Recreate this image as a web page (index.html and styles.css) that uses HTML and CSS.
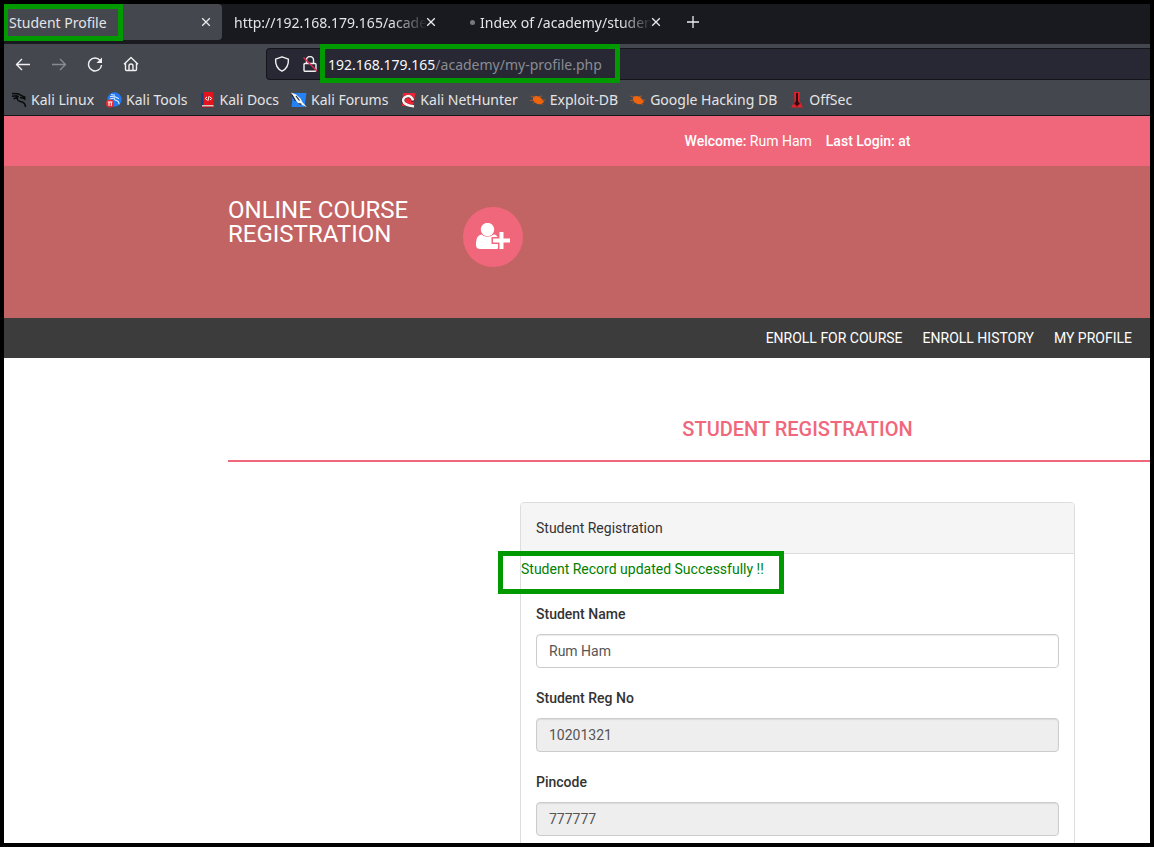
FILE: index.html
```html
<!DOCTYPE html>
<html lang="en">
<head>
<meta charset="utf-8">
<meta name="viewport" content="width=device-width, initial-scale=1">
<title>Student Profile</title>
<link rel="stylesheet" href="styles.css">
</head>
<body>
<div class="tabs">
  <div class="tab tab-active">
    <span class="tab-label">Student Profile</span>
    <button class="tab-close" aria-label="Close tab"><svg width="10" height="10" viewBox="0 0 10 10"><path d="M1.2 1.2l7.6 7.6M8.8 1.2L1.2 8.8"/></svg></button>
    <span class="mark mark-tab"></span>
  </div>
  <div class="tab">
    <span class="tab-label tab-fade">http://192.168.179.165/acade</span>
    <button class="tab-close" aria-label="Close tab"><svg width="10" height="10" viewBox="0 0 10 10"><path d="M1.2 1.2l7.6 7.6M8.8 1.2L1.2 8.8"/></svg></button>
  </div>
  <div class="tab tab-loading">
    <span class="tab-dot"></span>
    <span class="tab-label tab-fade">Index of /academy/studen</span>
    <button class="tab-close" aria-label="Close tab"><svg width="10" height="10" viewBox="0 0 10 10"><path d="M1.2 1.2l7.6 7.6M8.8 1.2L1.2 8.8"/></svg></button>
  </div>
  <button class="tab-new" aria-label="New tab"><svg width="14" height="14" viewBox="0 0 14 14"><path d="M7 1v12M1 7h12"/></svg></button>
</div>
<div class="toolbar">
  <div class="nav-buttons">
    <button class="tool" aria-label="Back"><svg width="16" height="16" viewBox="0 0 16 16"><path d="M15 8.500H1.500M7 3L1.500 8.500 7 14"/></svg></button>
    <button class="tool tool-off" aria-label="Forward"><svg width="16" height="16" viewBox="0 0 16 16"><path d="M1 8.500h13.500M9 3l5.500 5.500L9 14"/></svg></button>
    <button class="tool" aria-label="Reload"><svg width="16" height="16" viewBox="0 0 16 16"><path d="M13.200 4.500A6.500 6.500 0 1 0 14.500 9"/><path d="M15 1.500V7H9.500z" class="solid"/></svg></button>
    <button class="tool" aria-label="Home"><svg width="16" height="16" viewBox="0 0 16 16"><path d="M1 8.200L8 1.500l7 6.700M2.500 7v6.500a1 1 0 0 0 1 1h9a1 1 0 0 0 1-1V7M6 14.500V10a2 2 0 0 1 4 0v4.500"/></svg></button>
  </div>
  <div class="address">
    <svg class="line-icon" width="16" height="16" viewBox="0 0 16 16"><path d="M8 .8l6.400 2.400c.3 5.200-1.400 9.500-6.400 12C3 12.700 1.300 8.400 1.600 3.200z"/></svg>
    <svg class="line-icon" width="16" height="16" viewBox="0 0 16 16"><path d="M4.500 7V4a3.500 3.500 0 0 1 7 0v3M3 7.500h10a1 1 0 0 1 1 1v5.700a1 1 0 0 1-1 1H3a1 1 0 0 1-1-1V8.500a1 1 0 0 1 1-1z"/><path d="M1.500 1.500l13.500 13.500" class="slash"/></svg>
    <div class="url"><span class="url-host">192.168.179.165</span>/academy/my-profile.php<span class="mark mark-url"></span></div>
  </div>
</div>
<nav class="bookmarks" aria-label="Bookmarks">
  <a href="#"><svg width="16" height="16" viewBox="0 0 16 16"><path d="M1 1.500l6 .3 4 2 3.500 1.700M1 4.200l5.500-.4M2.500 6.800l4.500-1.500M7.500 4C5 6.500 6.500 9 9.500 9.500c3 .4 4.800 1.800 5 5.500M9 5.500l3.500.7 2 1.300" fill="none" stroke="#08090b" stroke-width="1.500"/></svg>Kali Linux</a>
  <a href="#"><svg width="16" height="16" viewBox="0 0 16 16"><circle cx="8.500" cy="7.500" r="7.200" fill="#2478f2"/><path d="M4 4.500l5 .3 4 2M8.500 5.500c-1 2 .5 2.800 2.500 3.300 1.500.4 2 1.700 2 3.500M3.500 7l4-.8M5 2.500l4 .8" fill="none" stroke="#d8edff" stroke-width="1.100"/><circle cx="4" cy="11.500" r="4" fill="#e92a32"/><path d="M1.800 10h4.600M3 10v4M5.300 10v4" stroke="#fff" fill="none"/></svg>Kali Tools</a>
  <a href="#"><svg width="16" height="16" viewBox="0 0 16 16"><path d="M1.500 1h2v13h-2z" fill="#123d7d"/><path d="M3.500 0h10v13h-10z" fill="#e3141b"/><path d="M2 13h11.500v2H2z" fill="#d7c9c9"/><path d="M2 14.500h11.500v1H2z" fill="#b30c17"/><path d="M7 5L5.200 6.500 7 8M10 5l1.800 1.500L10 8M9.200 4L7.800 9" fill="none" stroke="#fff" stroke-width="1"/></svg>Kali Docs</a>
  <a href="#"><svg width="16" height="16" viewBox="0 0 16 16"><path d="M2 1h13.500L13.500 15H.5z" fill="#2482f5"/><path d="M0 .5l5 2 4.500 4 2.200 4 4.300 4.800-4-2-4-1.300L4.500 8 2.500 4.500z" fill="#f5f3ed"/><path d="M5 4l3.500 4.500M1 3l3.500 6M7.500 11.500l3 .8" stroke="#17243a" stroke-width="1.200"/></svg>Kali Forums</a>
  <a href="#"><svg width="16" height="16" viewBox="0 0 16 16"><path d="M3 1h12.500L13 14H2z" fill="#ed2435"/><path d="M13 9.500C12.500 5.500 10 4 7 4.500c-4 1-5 4-2.800 6.500s5 2.500 9.800 3.500" fill="none" stroke="#35131d" stroke-width="3.200"/><path d="M13 8.500C12.500 5.500 10 3.500 7 4.200c-4 1-5 4.500-2.800 6.800s5 2.500 9.800 3.500" fill="none" stroke="#f7f2f0" stroke-width="2.600"/></svg>Kali NetHunter</a>
  <a href="#"><svg width="16" height="16" viewBox="0 0 16 16"><path d="M3 5C6 3 9.500 4 11.500 6.500l2.500 3.500-2.500 2C8 13 4 11 3 8z" fill="#ef640d"/><path d="M.5 4l4 1.500M0 8.500l4-.5M9 4.500l3-.5M11 8h4.500M5 9.500l-2 2M11 10.500l1.500 2.500" stroke="#c65c22" stroke-width=".8"/></svg>Exploit-DB</a>
  <a href="#"><svg width="16" height="16" viewBox="0 0 16 16"><path d="M3 5C6 3 9.500 4 11.500 6.500l2.500 3.500-2.500 2C8 13 4 11 3 8z" fill="#ef640d"/><path d="M.5 4l4 1.500M0 8.500l4-.5M9 4.500l3-.5M11 8h4.500M5 9.500l-2 2M11 10.500l1.500 2.500" stroke="#c65c22" stroke-width=".8"/></svg>Google Hacking DB</a>
  <a href="#"><svg width="16" height="16" viewBox="0 0 16 16"><path d="M5 0h6l-.5 9 3.500 6.500H2L5.500 10z" fill="#e32028"/><path d="M7 1h2v8l2 3-2 1-1 2-1-2-2-1 2-3z" fill="#320b12"/></svg>OffSec</a>
</nav>
<div class="page">
  <header class="welcome"><p><strong>Welcome:</strong> Rum Ham</p><p><strong>Last Login: at</strong></p></header>
  <div class="banner">
    <a class="brand" href="#">Online Course Registration</a>
    <span class="user-badge"><svg width="36" height="28" viewBox="0 0 36 28"><circle cx="12.500" cy="6.500" r="6.700"/><path d="M6.500 11.500c4 3 8 3 12 0 3 0 4.500 2 5 5v8.500c-.5.500-1.500 1-3 1H5c-2.500 0-4-1.500-4-4 0-5 1-10 5.500-10.500z"/><path class="plus-edge" d="M24.500 9h4v6.500H35v4h-6.500V26h-4v-6.500H18v-4h6.500z"/><path d="M24.500 9h4v6.500H35v4h-6.500V26h-4v-6.500H18v-4h6.500z"/></svg></span>
  </div>
  <nav class="menu" aria-label="Main"><a href="#">Enroll for Course</a><a href="#">Enroll History</a><a href="#">My Profile</a></nav>
  <main class="content">
    <h1 class="title">Student Registration</h1>
    <section class="panel">
      <h2 class="panel-heading">Student Registration</h2>
      <p class="message">Student Record updated Successfully !!<span class="mark mark-message"></span></p>
      <form class="form">
        <div class="field"><label for="name">Student Name</label><input id="name" type="text" value="Rum Ham"></div>
        <div class="field"><label for="regno">Student Reg No</label><input id="regno" type="text" value="10201321" readonly></div>
        <div class="field"><label for="pincode">Pincode</label><input id="pincode" type="text" value="777777" readonly></div>
      </form>
    </section>
  </main>
</div>
</body>
</html>
```
FILE: styles.css
```css
* { box-sizing: border-box; }
html { background: #000; }
body {
  margin: 0;
  height: 100vh;
  border: 4px solid #000;
  display: flex;
  flex-direction: column;
  overflow: hidden;
  font: 14px/20px Roboto, "Liberation Sans", sans-serif;
  color: #333;
}
button { border: 0; padding: 0; background: none; color: inherit; display: flex; align-items: center; justify-content: center; }
svg { display: block; flex: none; }
a { color: inherit; text-decoration: none; }
p, h1, h2 { margin: 0; font-weight: 400; }

.tabs, .toolbar, .bookmarks { font-family: "Noto Sans", sans-serif; color: #e4e4e6; flex: none; display: flex; }
.tabs { height: 40px; background: #191a20; }
.tab { position: relative; width: 225px; height: 36px; padding: 0 8px 0 12px; display: flex; align-items: center; }
.tab-active { width: 218px; padding-left: 5px; background: #44474d; border-radius: 0 4px 4px 0; }
.tab-label { flex: 1; min-width: 0; padding-top: 1px; white-space: nowrap; }
.tab-fade { margin-right: -8px; -webkit-mask-image: linear-gradient(to right, #000 80%, transparent 98%); mask-image: linear-gradient(to right, #000 80%, transparent 98%); }
.tab-loading { padding-left: 23px; gap: 5px; }
.tab-loading .tab-label { margin-right: -13px; }
.tab-dot { width: 5px; height: 5px; border-radius: 50%; background: #77787d; }
.tab-close { width: 16px; height: 16px; }
.tab-close svg, .tab-new svg { fill: none; stroke: #ececee; stroke-width: 1.3; }
.tab-new { width: 42px; height: 36px; }

.toolbar { height: 40px; background: #44474d; align-items: center; }
.nav-buttons { width: 262px; padding-left: 11px; display: flex; gap: 20px; }
.tool svg, .line-icon { fill: none; stroke: #f0f0f2; stroke-width: 1.4; stroke-linejoin: round; }
.tool .solid { fill: #f0f0f2; stroke: none; }
.tool-off { opacity: .4; }
.line-icon .slash { stroke: #e22850; }
.address { flex: 1; height: 32px; padding-left: 7px; display: flex; align-items: center; gap: 12px; background: #272833; border: 1px solid #15161b; border-right: 0; border-radius: 4px 0 0 4px; }
.url { position: relative; flex: 1; margin-left: -2px; padding-top: 1px; color: #8a8b92; }
.url-host { color: #f8f8fa; }

.bookmarks { height: 32px; padding-left: 7px; gap: 12px; align-items: center; background: #44474d; border-bottom: 1px solid #15161b; }
.bookmarks a { display: flex; align-items: center; gap: 4px; white-space: nowrap; }

.page { flex: 1; min-height: 0; overflow: hidden; background: #fff; }
.welcome { height: 50px; padding-left: 441px; display: flex; align-items: center; justify-content: center; gap: 14px; background: #f0677c; color: #fff; }
.welcome strong, .field label { font-weight: 500; }
.banner { height: 152px; padding-left: 224px; display: flex; background: #c36464; }
.brand { width: 235px; padding: 32px 30px 0 0; color: #fff; font-size: 24px; line-height: 24px; text-transform: uppercase; }
.user-badge { width: 60px; height: 60px; margin-top: 41px; border-radius: 50%; background: #f0677c; display: flex; align-items: center; justify-content: center; }
.user-badge svg { fill: #fff; }
.user-badge .plus-edge { fill: #f0677c; stroke: #f0677c; stroke-width: 3; }
.menu { height: 40px; padding-right: 18px; display: flex; align-items: center; justify-content: flex-end; gap: 20px; background: #3c3c3c; color: #fff; text-transform: uppercase; }

.content { padding: 59px 0 0 224px; }
.title { padding: 0 0 19px 217px; margin-bottom: 40px; border-bottom: 2px solid #f0677c; color: #f0677c; font-size: 20px; font-weight: 500; line-height: 24px; text-align: center; text-transform: uppercase; }
.panel { margin: 0 75px 0 292px; border: 1px solid #ddd; border-radius: 4px; }
.panel-heading { padding: 15px; font-size: 14px; line-height: 20px; background: #f5f5f5; border-bottom: 1px solid #ddd; border-radius: 3px 3px 0 0; }
.message { position: relative; padding-top: 5px; color: #008000; }
.form { padding: 25px 15px 15px; display: grid; gap: 20px; }
.field { display: grid; gap: 10px; }
.field input { width: 100%; height: 34px; padding: 6px 12px; border: 1px solid #ccc; border-radius: 4px; background: #fff; color: #555; font: inherit; box-shadow: inset 0 1px 1px rgba(0, 0, 0, .08); }
.field input[readonly] { background: #eee; }

.mark { position: absolute; border: 5px solid #090; }
.mark-tab { left: -1px; top: 0; width: 120px; height: 37px; }
.mark-url { left: -8px; top: -10px; width: 300px; height: 39px; }
.mark-message { left: -23px; top: -3px; width: 286px; height: 43px; }
```
